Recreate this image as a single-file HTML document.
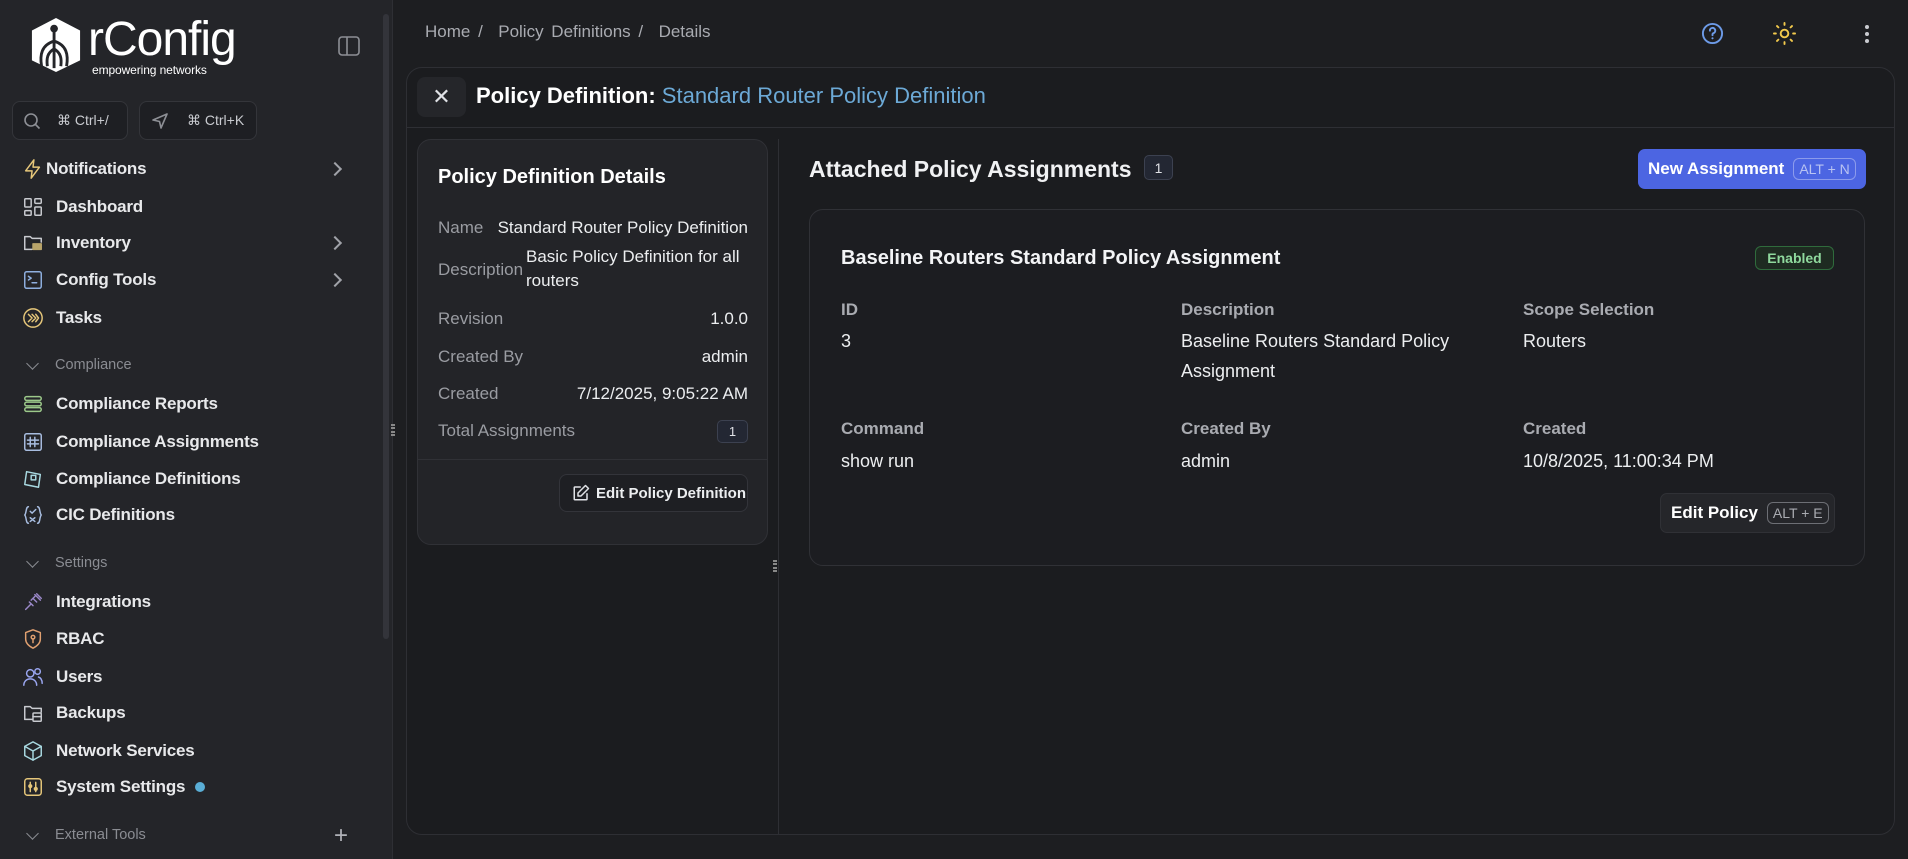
<!DOCTYPE html>
<html><head><meta charset="utf-8">
<style>
*{box-sizing:border-box;margin:0;padding:0}
body{width:1908px;height:859px;background:#1d1e21;font-family:"Liberation Sans",sans-serif;color:#e9eaec;position:relative;overflow:hidden}
.abs{position:absolute}
#side{left:0;top:0;width:393px;height:859px;background:#242529;border-right:1px solid #2e2f34}
.nav{position:absolute;left:22px;font-size:17px;font-weight:bold;color:#e8e9eb;display:flex;align-items:center;height:26px;letter-spacing:-0.2px}
.nav svg{width:22px;height:22px;margin-right:12px;fill:none;stroke-width:1.6;stroke-linecap:round;stroke-linejoin:round}
.sec{position:absolute;left:22px;font-size:14.5px;color:#8a8c92;display:flex;align-items:center}
.chev{position:absolute;left:332px;width:10px;height:10px;border-right:2px solid #a0a2a8;border-top:2px solid #a0a2a8;transform:rotate(45deg)}
.kbtn{position:absolute;top:101px;height:39px;border:1px solid #34353a;border-radius:8px;background:#1e1f23;display:flex;align-items:center;font-size:14px;color:#c9cbd0}
.panel{left:406px;top:67px;width:1489px;height:768px;border:1px solid #2e2f34;border-radius:16px;background:#1b1c1f}
.lbl{color:#9a9ca2;font-size:17px}
.val{color:#eceef0;font-size:17px}
.badge{display:inline-flex;align-items:center;justify-content:center;border:1px solid #3c4150;border-radius:5px;background:#232733;font-size:13px;color:#dfe1e6}
.clabel{font-size:17px;font-weight:bold;color:#a9abb1}
.cval{font-size:18px;color:#eceef0;line-height:30px}
</style></head><body>
<div id="side" class="abs">
  <svg class="abs" style="left:30px;top:16px" width="52" height="58" viewBox="0 0 54 60">
    <path d="M27 2 L52 15 L52 46 L27 58 L2 46 L2 15 Z" fill="#fff"/>
    <circle cx="25" cy="13" r="4" fill="#242529"/>
    <path d="M25 16 V54 M25 26 C12 30 10 40 12 52 M25 26 C38 30 40 40 38 52 M25 34 C18 38 17 44 18 52 M25 34 C32 38 33 44 32 52" stroke="#242529" stroke-width="3" fill="none"/>
  </svg>
  <div class="abs" style="left:88px;top:15px;font-size:48px;color:#fff;letter-spacing:-1px;line-height:50px">rConfig</div>
  <div class="abs" style="left:92px;top:63px;font-size:12px;color:#fff;letter-spacing:-0.1px">empowering networks</div>
  <svg class="abs" style="left:338px;top:36px" width="22" height="20" viewBox="0 0 22 20"><rect x="1" y="1" width="20" height="18" rx="3" stroke="#8d8f95" stroke-width="1.6" fill="none"/><path d="M9 1V19" stroke="#8d8f95" stroke-width="1.6"/></svg>
  <div class="kbtn" style="left:12px;width:116px"><svg style="margin-left:10px" width="18" height="18" viewBox="0 0 18 18"><circle cx="8" cy="8" r="6" stroke="#8d8f95" stroke-width="1.6" fill="none"/><path d="M12.5 12.5L16.5 16.5" stroke="#8d8f95" stroke-width="1.6"/></svg><span style="margin-left:16px">⌘ Ctrl+/</span></div>
  <div class="kbtn" style="left:139px;width:118px"><svg style="margin-left:11px" width="18" height="18" viewBox="0 0 18 18"><path d="M2 8L16 2L10 16L8.5 9.5Z" stroke="#8d8f95" stroke-width="1.6" fill="none" stroke-linejoin="round"/></svg><span style="margin-left:18px">⌘ Ctrl+K</span></div>

  <div class="nav" style="top:156px"><svg viewBox="0 0 24 24" stroke="#e6c77a" style="margin-right:2px"><path d="M13 2L4 14h7l-1 8 9-12h-7z"/></svg>Notifications</div><div class="chev" style="top:164px;left:330px"></div>
  <div class="nav" style="top:194px"><svg viewBox="0 0 24 24" stroke="#c9cbd0"><rect x="3" y="3" width="7" height="9" rx="1"/><rect x="14" y="3" width="7" height="5" rx="1"/><rect x="14" y="12" width="7" height="9" rx="1"/><rect x="3" y="16" width="7" height="5" rx="1"/></svg>Dashboard</div>
  <div class="nav" style="top:230px"><svg viewBox="0 0 24 24" stroke="#c9cbd0"><path d="M3 19V5h6l2 2h10v4"/><path d="M3 19h8"/><rect x="12" y="13" width="9" height="6" fill="#b8a46a" stroke="#b8a46a"/></svg>Inventory</div><div class="chev" style="top:238px;left:330px"></div>
  <div class="nav" style="top:267px"><svg viewBox="0 0 24 24" stroke="#8fb0e0"><rect x="3" y="3" width="18" height="18" rx="2"/><path d="M7 8l3 2-3 2M11 15h5"/></svg>Config Tools</div><div class="chev" style="top:275px;left:330px"></div>
  <div class="nav" style="top:305px"><svg viewBox="0 0 24 24" stroke="#e6c77a"><circle cx="12" cy="12" r="10"/><path d="M7 8l4 4-4 4M11 8l4 4-4 4M15 8l3 4-3 4"/></svg>Tasks</div>

  <div class="sec" style="top:357px"><span style="display:inline-block;width:9px;height:9px;border-right:1.6px solid #8a8c92;border-bottom:1.6px solid #8a8c92;transform:rotate(45deg);margin:0 18px 4px 6px"></span>Compliance</div>
  <div class="nav" style="top:391px"><svg viewBox="0 0 24 24" stroke="#9cc98a"><rect x="3" y="4" width="18" height="4" rx="2"/><rect x="3" y="10" width="18" height="4" rx="2"/><rect x="3" y="16" width="18" height="4" rx="2"/></svg>Compliance Reports</div>
  <div class="nav" style="top:429px"><svg viewBox="0 0 24 24" stroke="#a8bde0"><rect x="3" y="3" width="18" height="18" rx="2"/><path d="M9 7v10M14 7v10M6 10h12M6 14h12"/></svg>Compliance Assignments</div>
  <div class="nav" style="top:466px"><svg viewBox="0 0 24 24" stroke="#a8d8e0"><path d="M5 4l15 3-2 14-15-3z"/><rect x="10" y="8" width="5" height="5"/></svg>Compliance Definitions</div>
  <div class="nav" style="top:502px"><svg viewBox="0 0 24 24" stroke="#a8bde0"><path d="M7 3C4 3 5 10 3 12c2 2 1 9 4 9M17 3c3 0 2 7 4 9-2 2-1 9-4 9M9 15l5 4M14 15l-5 4M9 8l2 2 4-4"/></svg>CIC Definitions</div>

  <div class="sec" style="top:555px"><span style="display:inline-block;width:9px;height:9px;border-right:1.6px solid #8a8c92;border-bottom:1.6px solid #8a8c92;transform:rotate(45deg);margin:0 18px 4px 6px"></span>Settings</div>
  <div class="nav" style="top:589px"><svg viewBox="0 0 24 24" stroke="#9a88c8"><path d="M4 20l6-6M8 12l4 4M12 8l4 4M14 4l6 6M16 3l5 5M10 10l4-4"/></svg>Integrations</div>
  <div class="nav" style="top:626px"><svg viewBox="0 0 24 24" stroke="#e0a070"><path d="M12 2l8 3v7c0 5-4 8-8 10-4-2-8-5-8-10V5z"/><circle cx="12" cy="10" r="2"/><path d="M12 12v4"/></svg>RBAC</div>
  <div class="nav" style="top:664px"><svg viewBox="0 0 24 24" stroke="#9aa6f0"><circle cx="9" cy="8" r="4"/><path d="M2 21c0-4 3-7 7-7s7 3 7 7"/><circle cx="17" cy="6" r="3"/><path d="M18 12c3 1 4 4 4 7"/></svg>Users</div>
  <div class="nav" style="top:700px"><svg viewBox="0 0 24 24" stroke="#c9cbd0"><path d="M3 19V5h6l2 2h10v4"/><path d="M3 19h8"/><rect x="12" y="12" width="9" height="9" rx="1"/><path d="M12 16h9"/></svg>Backups</div>
  <div class="nav" style="top:738px"><svg viewBox="0 0 24 24" stroke="#a8d8e0"><path d="M12 2l9 5v10l-9 5-9-5V7z"/><path d="M3 7l9 5 9-5M12 12v10"/></svg>Network Services</div>
  <div class="nav" style="top:774px"><svg viewBox="0 0 24 24" stroke="#e6c77a"><rect x="3" y="3" width="18" height="18" rx="3"/><path d="M9 7v10M15 7v10"/><circle cx="9" cy="11" r="1.5"/><circle cx="15" cy="14" r="1.5"/></svg>System Settings<span style="display:inline-block;width:10px;height:10px;border-radius:50%;background:#5aaed6;margin-left:10px"></span></div>

  <div class="sec" style="top:827px"><span style="display:inline-block;width:9px;height:9px;border-right:1.6px solid #8a8c92;border-bottom:1.6px solid #8a8c92;transform:rotate(45deg);margin:0 18px 4px 6px"></span>External Tools</div>
  <div class="abs" style="left:334px;top:822px;font-size:24px;color:#b0b2b8">+</div>
  <div class="abs" style="left:383px;top:14px;width:6px;height:625px;border-radius:3px;background:#33343a"></div>
</div>
<div class="abs" style="left:391px;top:424px;width:4px;height:12px;border-left:2px dotted #888;border-right:2px dotted #888"></div>

<div class="abs" style="left:425px;top:22px;font-size:17px;color:#a9abb1;word-spacing:3px">Home /&nbsp; Policy Definitions /&nbsp; Details</div>
<svg class="abs" style="left:1701px;top:22px" width="23" height="23" viewBox="0 0 24 24"><circle cx="12" cy="12" r="10" stroke="#6d9be8" stroke-width="2" fill="none"/><path d="M9.3 9a2.8 2.8 0 1 1 3.7 2.6c-.7.3-1 .9-1 1.6v.6" stroke="#6d9be8" stroke-width="2" fill="none" stroke-linecap="round"/><circle cx="12" cy="17" r="1.1" fill="#6d9be8"/></svg>
<svg class="abs" style="left:1773px;top:22px" width="23" height="23" viewBox="0 0 24 24" stroke="#f2c94c" stroke-width="2" fill="none" stroke-linecap="round"><circle cx="12" cy="12" r="4"/><path d="M12 1v2M12 21v2M1 12h2M21 12h2M4.2 4.2l1.4 1.4M18.4 18.4l1.4 1.4M4.2 19.8l1.4-1.4M18.4 5.6l1.4-1.4"/></svg>
<svg class="abs" style="left:1864px;top:24px" width="6" height="20" viewBox="0 0 6 20" fill="#c9cbd0"><circle cx="3" cy="3" r="2"/><circle cx="3" cy="10" r="2"/><circle cx="3" cy="17" r="2"/></svg>

<div class="abs panel">
  <div class="abs" style="left:10px;top:9px;width:49px;height:40px;border-radius:8px;background:#25262a;color:#e0e2e6;font-size:22px;text-align:center;line-height:40px">✕</div>
  <div class="abs" style="left:69px;top:15px;font-size:22px;font-weight:bold;color:#fff">Policy Definition: <span style="color:#6ca9d6;font-weight:normal">Standard Router Policy Definition</span></div>
  <div class="abs" style="left:0;top:59px;width:1487px;height:1px;background:#2e2f34"></div>
  <div class="abs" style="left:371px;top:71px;width:1px;height:696px;background:#2e2f34"></div>
  <div class="abs" style="left:366px;top:492px;width:4px;height:12px;border-left:2px dotted #888;border-right:2px dotted #888"></div>

  <div class="abs" style="left:10px;top:71px;width:351px;height:406px;border:1px solid #303136;border-radius:14px;background:#232428">
    <div class="abs" style="left:20px;top:26px;font-size:20px;font-weight:bold;color:#fff">Policy Definition Details</div>
    <div class="abs lbl" style="left:20px;top:78px">Name</div><div class="abs val" style="right:19px;top:78px">Standard Router Policy Definition</div>
    <div class="abs lbl" style="left:20px;top:120px">Description</div><div class="abs val" style="left:108px;top:105px;line-height:24px">Basic Policy Definition for all<br>routers</div>
    <div class="abs lbl" style="left:20px;top:169px">Revision</div><div class="abs val" style="right:19px;top:169px">1.0.0</div>
    <div class="abs lbl" style="left:20px;top:207px">Created By</div><div class="abs val" style="right:19px;top:207px">admin</div>
    <div class="abs lbl" style="left:20px;top:244px">Created</div><div class="abs val" style="right:19px;top:244px">7/12/2025, 9:05:22 AM</div>
    <div class="abs lbl" style="left:20px;top:281px">Total Assignments</div><div class="abs badge" style="right:19px;top:280px;width:31px;height:23px">1</div>
    <div class="abs" style="left:0;top:319px;width:349px;height:1px;background:#303136"></div>
    <div class="abs" style="left:141px;top:334px;width:189px;height:38px;border:1px solid #33343a;border-radius:8px;background:#1e1f23;display:flex;align-items:center;font-size:15px;font-weight:bold;color:#eceef0"><svg style="margin:0 6px 0 12px" width="18" height="18" viewBox="0 0 24 24" fill="none" stroke="#e0e2e6" stroke-width="2" stroke-linecap="round" stroke-linejoin="round"><path d="M20 13v7a1 1 0 0 1-1 1H4a1 1 0 0 1-1-1V5a1 1 0 0 1 1-1h7"/><path d="M18 2l4 4-10 10H8v-4z"/></svg>Edit Policy Definition</div>
  </div>

  <div class="abs" style="left:402px;top:88px;font-size:23px;font-weight:bold;color:#f0f1f3">Attached Policy Assignments</div>
  <div class="abs badge" style="left:737px;top:87px;width:29px;height:25px;font-size:14px">1</div>
  <div class="abs" style="left:1231px;top:81px;width:228px;height:40px;border-radius:7px;background:#4c65e2;display:flex;align-items:center;font-size:17px;font-weight:bold;color:#fff"><span style="margin-left:10px">New Assignment</span><span style="margin-left:9px;border:1px solid #8c9bec;border-radius:6px;font-size:14px;font-weight:normal;color:#b9c3f2;padding:2px 5px">ALT + N</span></div>

  <div class="abs" style="left:402px;top:141px;width:1056px;height:357px;border:1px solid #303136;border-radius:14px;background:#1c1d21">
    <div class="abs" style="left:31px;top:37px;font-size:20px;font-weight:bold;color:#f3f4f6">Baseline Routers Standard Policy Assignment</div>
    <div class="abs" style="left:945px;top:36px;width:79px;height:24px;border:1px solid #2f6b3c;border-radius:6px;background:#1e2b21;color:#8fd99d;font-size:14px;font-weight:bold;text-align:center;line-height:22px">Enabled</div>
    <div class="abs clabel" style="left:31px;top:90px">ID</div><div class="abs cval" style="left:31px;top:116px">3</div>
    <div class="abs clabel" style="left:371px;top:90px">Description</div><div class="abs cval" style="left:371px;top:116px">Baseline Routers Standard Policy<br>Assignment</div>
    <div class="abs clabel" style="left:713px;top:90px">Scope Selection</div><div class="abs cval" style="left:713px;top:116px">Routers</div>
    <div class="abs clabel" style="left:31px;top:209px">Command</div><div class="abs cval" style="left:31px;top:236px">show run</div>
    <div class="abs clabel" style="left:371px;top:209px">Created By</div><div class="abs cval" style="left:371px;top:236px">admin</div>
    <div class="abs clabel" style="left:713px;top:209px">Created</div><div class="abs cval" style="left:713px;top:236px">10/8/2025, 11:00:34 PM</div>
    <div class="abs" style="left:850px;top:283px;width:175px;height:40px;border:1px solid #303136;border-radius:7px;background:#25262a;display:flex;align-items:center;font-size:17px;font-weight:bold;color:#fff"><span style="margin-left:10px">Edit Policy</span><span style="margin-left:9px;border:1px solid #6d6f75;border-radius:6px;font-size:14px;font-weight:normal;color:#a9abb1;padding:2px 5px">ALT + E</span></div>
  </div>
</div>
</body></html>
